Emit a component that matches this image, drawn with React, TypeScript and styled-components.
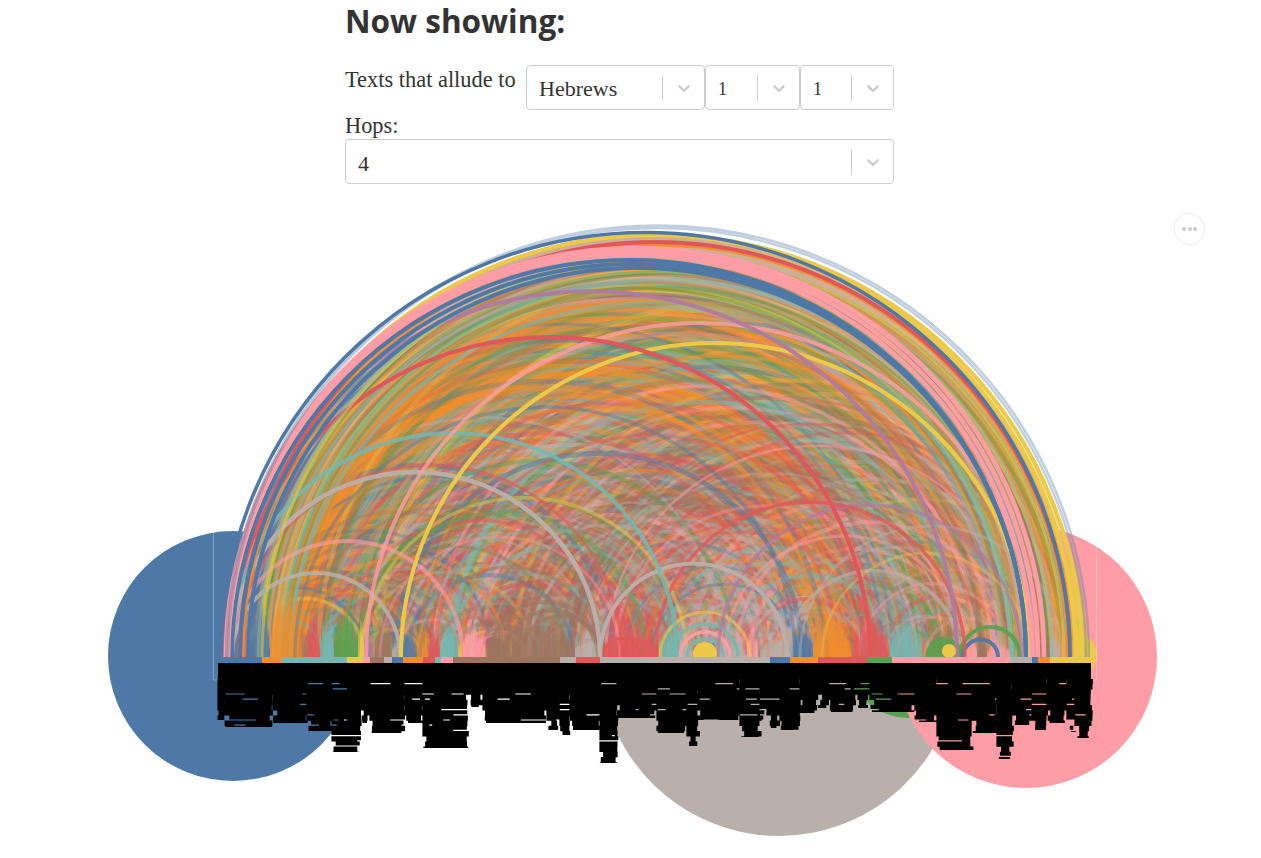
import React from "react";
import styled, { createGlobalStyle } from "styled-components";

const C = {
  blue: "#4e79a7", orange: "#f28e2c", red: "#e15759", teal: "#76b7b2", green: "#59a14f",
  yellow: "#edc949", purple: "#af7aa1", pink: "#ff9da7", brown: "#9c755f", grey: "#bab0ab",
};
type Col = keyof typeof C;
const colNames = Object.keys(C) as Col[];

const AXIS_Y = 657;

function rng(seed: number) {
  let a = seed;
  return () => {
    a |= 0; a = (a + 0x6d2b79f5) | 0;
    let t = Math.imul(a ^ (a >>> 15), 1 | a);
    t = (t + Math.imul(t ^ (t >>> 7), 61 | t)) ^ t;
    return ((t ^ (t >>> 14)) >>> 0) / 4294967296;
  };
}

const arcD = (x1: number, x2: number) => {
  const l = Math.min(x1, x2), h = Math.max(x1, x2), r = (h - l) / 2;
  return `M${l.toFixed(1)} ${AXIS_Y}A${r.toFixed(1)} ${r.toFixed(1)} 0 0 1 ${h.toFixed(1)} ${AXIS_Y}`;
};

// [from x, to x, colour, arc weight, column height]
type Band = [number, number, Col, number, number];
const bands: Band[] = [
  [224, 240, "blue", 1, 40], [240, 247, "red", 1, 50], [247, 270, "blue", 1, 60], [270, 302, "orange", 1.7, 68], [302, 307, "brown", 1, 30],
  [307, 320, "red", 1.4, 48], [320, 333, "teal", 1.2, 40], [334, 358, "green", 1.4, 50], [358, 364, "yellow", 1.2, 34], [364, 373, "purple", 1, 34],
  [375, 390, "brown", 1, 34], [392, 402, "grey", 1, 18], [403, 416, "blue", 1.2, 30], [417, 428, "orange", 1.2, 34],
  [428, 440, "red", 1, 22], [440, 458, "teal", 1, 34], [458, 462, "yellow", 1, 20], [463, 485, "pink", 1.1, 36],
  [488, 575, "brown", 0.8, 40], [575, 600, "grey", 1, 22], [602, 657, "red", 1.2, 30], [660, 677, "teal", 1, 26],
  [678, 692, "grey", 1.2, 14], [718, 745, "grey", 0.8, 18], [747, 757, "pink", 1, 26],
  [760, 790, "grey", 1, 18], [793, 813, "blue", 1, 34], [813, 850, "orange", 1.1, 44], [852, 887, "red", 1.1, 36],
  [890, 920, "teal", 0.9, 40], [927, 957, "green", 0.7, 22], [963, 977, "pink", 1, 20], [977, 987, "brown", 1, 18],
  [987, 1010, "pink", 0.8, 14], [1010, 1015, "teal", 1, 14], [1023, 1033, "pink", 1, 20], [1043, 1050, "brown", 1, 24],
  [1050, 1060, "grey", 1, 24], [1060, 1067, "orange", 1, 30], [1067, 1086, "yellow", 1.1, 30],
];

type Arc = { d: string; c: string; w: number; o: number };

function buildArcs() {
  const r = rng(1827);
  const out: Arc[] = [];
  const total = bands.reduce((s, b) => s + (b[1] - b[0]) * b[3], 0);
  const pick = () => {
    let v = r() * total;
    for (const b of bands) { v -= (b[1] - b[0]) * b[3]; if (v <= 0) return b; }
    return bands[0];
  };
  const push = (a: number, b: number, c: Col, w: number, o: number) =>
    out.push({ d: arcD(a, b), c: C[c], w, o });

  for (let i = 0; i < 1500; i++) {
    const b = pick();
    const p = b[0] + r() * (b[1] - b[0]);
    let q = 230 + r() * 840;
    if (Math.abs(p - q) < 40) q = p + (p < 650 ? 90 + r() * 300 : -90 - r() * 300);
    push(p, q, b[2], 2.5 + r() * 2.5, 0.24 + r() * 0.26);
  }
  for (let i = 0; i < 100; i++) {
    push(262 + r() * 42, 820 + r() * 240, "orange", 3 + r() * 2.5, 0.34 + r() * 0.22);
  }
  for (let i = 0; i < 40; i++) {
    push(250 + r() * 110, 900 + r() * 150, i % 3 ? "green" : "teal", 3 + r() * 1.5, 0.25 + r() * 0.15);
  }
  for (let i = 0; i < 60; i++) {
    push(470 + r() * 110, 830 + r() * 190, "brown", 3 + r() * 1.5, 0.26 + r() * 0.16);
  }
  for (let i = 0; i < 90; i++) {
    const k = i % 3;
    push(500 + r() * 320, 700 + r() * 340, k === 0 ? "red" : k === 1 ? "pink" : "grey", 2.5 + r() * 2, 0.25 + r() * 0.2);
  }
  // Inner mesh near the axis.
  for (const b of bands) {
    const n = Math.ceil((b[1] - b[0]) * 1.1);
    for (let i = 0; i < n; i++) {
      const p = b[0] + r() * (b[1] - b[0]);
      const span = 30 + r() * 170;
      const q = r() < 0.5 ? p + span : p - span;
      if (q < 224 || q > 1086) continue;
      push(p, q, b[2], 2.5 + r() * 2, 0.22 + r() * 0.18);
    }
  }
  // Shuffle, so that no colour sits on top of all the others.
  for (let i = out.length - 1; i > 0; i--) {
    const j = Math.floor(r() * (i + 1));
    [out[i], out[j]] = [out[j], out[i]];
  }
  // A few outer arcs of the rim, which do stay near the top.
  for (let i = 0; i < 40; i++) {
    const c: Col[] = ["orange", "yellow", "teal", "green", "brown", "grey"];
    push(252 + r() * 40, 1000 + r() * 68, c[i % 6], 2.5 + r() * 2, 0.45);
  }
  return out;
}

type Slat = { x: number; w: number; h: number; c: Col; o: number };
function buildSlats() {
  const r = rng(77);
  const s: Slat[] = [];
  for (const b of bands) {
    const width = b[1] - b[0];
    for (let x = b[0]; x < b[1]; x += 2) {
      const t = (x - b[0] + 1) / width;
      const arch = Math.pow(Math.max(0.02, 1 - Math.pow(2 * t - 1, 2)), 0.4);
      s.push({ x, w: 2.4, h: b[4] * arch * (0.8 + r() * 0.4), c: b[2], o: 0.65 + r() * 0.35 });
    }
  }
  return s;
}

const bold: [number, number, Col, number, number][] = [
  [800, 1062, "grey", 3, 0.45], [787, 960, "grey", 3.5, 0.65],
  [724, 966, "pink", 3, 0.45], [822, 1030, "yellow", 3, 0.35],
  [300, 600, "brown", 3.5, 0.4], [380, 620, "pink", 3, 0.35], [420, 600, "brown", 3.5, 0.45],
  [490, 600, "brown", 4, 0.6], [505, 598, "brown", 4, 0.6], [520, 602, "brown", 4, 0.6],
  [603, 640, "red", 3, 0.85], [612, 650, "red", 3, 0.55],
  [660, 750, "yellow", 3, 0.6], [672, 738, "teal", 3.5, 0.8], [680, 730, "pink", 3.5, 0.9], [687, 723, "teal", 3.5, 0.9],
  [927, 962, "green", 4, 0.9], [932, 958, "green", 4, 0.8],
  [960, 1020, "green", 4, 0.95], [963, 998, "blue", 4, 0.95],
  [295, 795, "blue", 3.5, 0.42], [718, 1022, "purple", 3.5, 0.65],
  [655, 965, "red", 3.5, 0.8], [238, 622, "red", 3, 0.55],
  [787, 600, "grey", 4, 0.95], [229, 677, "teal", 4, 0.85],
  [230, 600, "grey", 4.5, 0.95], [231, 463, "pink", 4, 0.6], [232, 400, "grey", 4, 0.85],
  [366, 1034, "pink", 4, 0.78], [401, 1029, "yellow", 4, 1], [230, 870, "red", 4, 1], [225, 957, "purple", 4, 0.95],
  [248, 1072, "orange", 3, 0.7], [262, 1064, "yellow", 3, 0.55], [258, 1052, "teal", 3, 0.45],
  [243, 1068, "orange", 3, 0.9], [240, 1070, "red", 4, 1],
  [232, 1076, "yellow", 4, 1],
];

const rimTop: [number, number, Col, number, number][] = [
  [248, 1026, "blue", 4, 1], [240, 1026, "blue", 4, 1], [232, 1026, "blue", 4, 1],
  [228, 1032, "pink", 4.5, 1], [227, 1038, "pink", 4.5, 1], [226, 1044, "pink", 4.5, 1],
];

const light: [number, number][] = [[228, 1086], [226, 1089]];

// Skyline of the black label block: [from x, to x, bottom y]
const sky: [number, number, number][] = [
  [218, 225, 720], [225, 272, 727], [273, 307, 723], [307, 332, 731], [332, 360, 752], [360, 370, 723],
  [370, 405, 733], [405, 423, 723], [423, 467, 748], [467, 483, 707], [483, 547, 723], [547, 560, 730],
  [560, 570, 735], [570, 600, 730], [600, 617, 763], [617, 657, 718], [657, 687, 733], [687, 698, 746],
  [698, 740, 720], [740, 760, 737], [760, 767, 720], [767, 780, 728], [780, 800, 730], [800, 818, 713],
  [818, 830, 708], [830, 855, 712], [855, 870, 708], [870, 915, 712], [915, 937, 722], [937, 972, 750],
  [972, 997, 733], [997, 1012, 759], [1012, 1032, 725], [1032, 1047, 730], [1047, 1067, 723],
  [1067, 1075, 732], [1075, 1091, 738],
];

function buildBlack() {
  const r = rng(4242);
  let d = "M218 663H1091V679.2H218Z";
  const step = 5.2;
  for (let y = 679; y < 765; y += step) {
    for (const [a, b, bottom] of sky) {
      if (y >= bottom) continue;
      const nearEnd = bottom - y < 14;
      const inset = nearEnd ? r() * 5 : 0;
      let x = a + inset;
      const end = b + (r() - 0.5) * 3 - (nearEnd ? r() * 4 : 0);
      while (x < end) {
        const w = Math.min(end - x, 4 + r() * 20);
        const slit = r();
        const hgt = Math.min(slit < 0.14 ? step - 1.2 : step + 0.15, bottom - y);
        const left = x - 0.6;
        d += `M${left.toFixed(1)} ${y.toFixed(1)}h${(w + 1.2).toFixed(1)}v${hgt.toFixed(1)}h-${(w + 1.2).toFixed(1)}Z`;
        x += w;
      }
    }
  }
  return d;
}

const axis: [number, number, Col][] = [
  [220, 262, "blue"], [262, 282, "orange"], [282, 347, "teal"], [347, 363, "yellow"], [363, 370, "pink"],
  [370, 384, "brown"], [384, 392, "grey"], [392, 403, "blue"], [403, 423, "orange"], [423, 435, "red"],
  [435, 441, "teal"], [441, 453, "pink"], [453, 560, "brown"], [560, 576, "grey"], [576, 600, "red"],
  [600, 770, "grey"], [770, 790, "blue"], [790, 818, "orange"], [818, 867, "red"], [867, 892, "green"],
  [892, 1010, "pink"], [1010, 1032, "grey"], [1032, 1038, "blue"], [1038, 1050, "orange"], [1050, 1090, "yellow"],
];

const arcs = buildArcs();
const slats = buildSlats();
const blackPath = buildBlack();

const Global = createGlobalStyle`
  html, body { margin: 0; padding: 0; background: #fff; }
  body { width: 1261px; height: 858px; overflow: hidden; font-family: "Liberation Serif", serif; color: #333; }
`;

const Page = styled.div`
  display: flex;
  flex-direction: column;
  width: 1261px;
`;

const Controls = styled.section`
  display: flex;
  flex-direction: column;
  width: 549px;
  margin-left: 345px;
`;

const Heading = styled.h1`
  margin: 0;
  height: 65px;
  font-family: "Open Sans", "Noto Sans", sans-serif;
  font-size: 31.5px;
  line-height: 41px;
  font-weight: 700;
  color: #333;
`;

const Row = styled.div`
  display: flex;
  align-items: flex-start;
`;

const Sentence = styled.span`
  font-size: 22.4px;
  line-height: 30px;
  width: 181px;
  flex: none;
  color: #333;
`;

const HopsLabel = styled.label`
  display: block;
  font-size: 22.4px;
  line-height: 29px;
  padding-top: 1px;
  height: 28px;
  color: #333;
`;

const SelectBox = styled.div<{ $width: number }>`
  box-sizing: border-box;
  display: flex;
  align-items: center;
  width: ${(p) => p.$width}px;
  height: 45px;
  flex: none;
  border: 1px solid #ccc;
  border-radius: 4px;
  background: #fff;
`;

const SelectValue = styled.span<{ $small?: boolean; $low?: boolean }>`
  flex: 1;
  padding: ${(p) => (p.$low ? 4 : 2)}px 0 0 12px;
  font-size: ${(p) => (p.$small ? 18 : 22)}px;
  line-height: 30px;
  color: #333;
`;

const Indicators = styled.div`
  display: flex;
  align-items: center;
  justify-content: center;
  flex: none;
  box-sizing: border-box;
  width: 42px;
  height: 26px;
  border-left: 1px solid #ccc;
  color: #ccc;
`;

const Chevron = styled.svg`
  width: 20px;
  height: 20px;
  fill: currentColor;
`;

const ChartArea = styled.div`
  position: relative;
  width: 1261px;
  height: 674px;
`;

const ChartSvg = styled.svg`
  display: block;
  width: 1261px;
  height: 674px;
`;

const MoreButton = styled.button`
  position: absolute;
  left: 1174px;
  top: 29px;
  box-sizing: border-box;
  width: 31px;
  height: 32px;
  display: flex;
  align-items: center;
  justify-content: center;
  gap: 1.6px;
  padding: 0;
  border: 1px solid #eee;
  border-radius: 50%;
  background: #fff;
`;

const Dot = styled.span`
  width: 4px;
  height: 4px;
  border-radius: 50%;
  background: #ccc;
`;

function Select({ value, width, small, low }: { value: string; width: number; small?: boolean; low?: boolean }) {
  return (
    <SelectBox $width={width}>
      <SelectValue $small={small} $low={low}>{value}</SelectValue>
      <Indicators>
        <Chevron viewBox="0 0 20 20" aria-hidden="true">
          <path d="M4.516 7.548c0.436-0.446 1.043-0.481 1.576 0l3.908 3.747 3.908-3.747c0.533-0.481 1.141-0.446 1.574 0 0.436 0.445 0.408 1.197 0 1.615-0.406 0.418-4.695 4.502-4.695 4.502-0.217 0.223-0.502 0.335-0.787 0.335s-0.57-0.112-0.789-0.335c0 0-4.287-4.084-4.695-4.502s-0.436-1.17 0-1.615z" />
        </Chevron>
      </Indicators>
    </SelectBox>
  );
}

function ArcChart() {
  return (
    <ChartSvg viewBox="0 184 1261 674" fill="none" aria-hidden="true">
      <defs>
        {colNames.map((n) => (
          <linearGradient key={n} id={`col-${n}`} x1="0" y1="1" x2="0" y2="0">
            <stop offset="0" stopColor={C[n]} stopOpacity={0.95} />
            <stop offset="0.6" stopColor={C[n]} stopOpacity={0.8} />
            <stop offset="1" stopColor={C[n]} stopOpacity={0} />
          </linearGradient>
        ))}
        <clipPath id="right-half">
          <rect x={654} y={184} width={607} height={480} />
        </clipPath>
      </defs>
      <circle cx={233} cy={656} r={125} fill={C.blue} />
      <circle cx={779} cy={657} r={179} fill={C.grey} />
      <circle cx={908} cy={657} r={61} fill={C.green} />
      <circle cx={1026} cy={657} r={131} fill={C.pink} />
      <circle cx={1075} cy={655} r={22} fill={C.yellow} />
      <rect x={213.5} y={200} width={883} height={480} stroke="#fff" strokeOpacity={0.3} />
      <path d={`M230 ${AXIS_Y}A424 424 0 0 1 1078 ${AXIS_Y}Z`} fill="#cfae92" />
      {arcs.map((a, i) => (
        <path key={i} d={a.d} stroke={a.c} strokeWidth={a.w} strokeOpacity={a.o} />
      ))}
      {slats.map((s, i) => (
        <rect key={i} x={s.x} y={AXIS_Y - s.h} width={s.w} height={s.h} fill={`url(#col-${s.c})`} opacity={s.o} />
      ))}
      {bold.map(([a, b, c, w, o], i) => (
        <path key={i} d={arcD(a, b)} stroke={C[c]} strokeWidth={w} strokeOpacity={o} />
      ))}
      <path d={arcD(238, 1082)} stroke={C.yellow} strokeWidth={4} clipPath="url(#right-half)" />
      {rimTop.map(([a, b, c, w, o], i) => (
        <path key={i} d={arcD(a, b)} stroke={C[c]} strokeWidth={w} strokeOpacity={o} />
      ))}
      {light.map(([a, b], i) => (
        <path key={i} d={arcD(a, b)} stroke={C.blue} strokeWidth={2.5} strokeOpacity={0.36} />
      ))}
      <path d={arcD(221, 1070)} stroke={C.blue} strokeWidth={3.5} />
      <circle cx={705} cy={654} r={12} fill={C.yellow} />
      <circle cx={949} cy={651} r={7} fill={C.yellow} />
      {axis.map(([a, b, c]) => (
        <rect key={a} x={a} y={AXIS_Y} width={b - a} height={6} fill={C[c]} />
      ))}
      <path d={blackPath} fill="#000" />
    </ChartSvg>
  );
}

export default function App() {
  return (
    <Page>
      <Global />
      <Controls>
        <Heading>Now showing:</Heading>
        <Row>
          <Sentence>Texts that allude to</Sentence>
          <Select value="Hebrews" width={179} />
          <Select value="1" width={95} small />
          <Select value="1" width={94} small />
        </Row>
        <HopsLabel>Hops:</HopsLabel>
        <Select value="4" width={549} low />
      </Controls>
      <ChartArea>
        <ArcChart />
        <MoreButton aria-label="More options">
          <Dot />
          <Dot />
          <Dot />
        </MoreButton>
      </ChartArea>
    </Page>
  );
}
